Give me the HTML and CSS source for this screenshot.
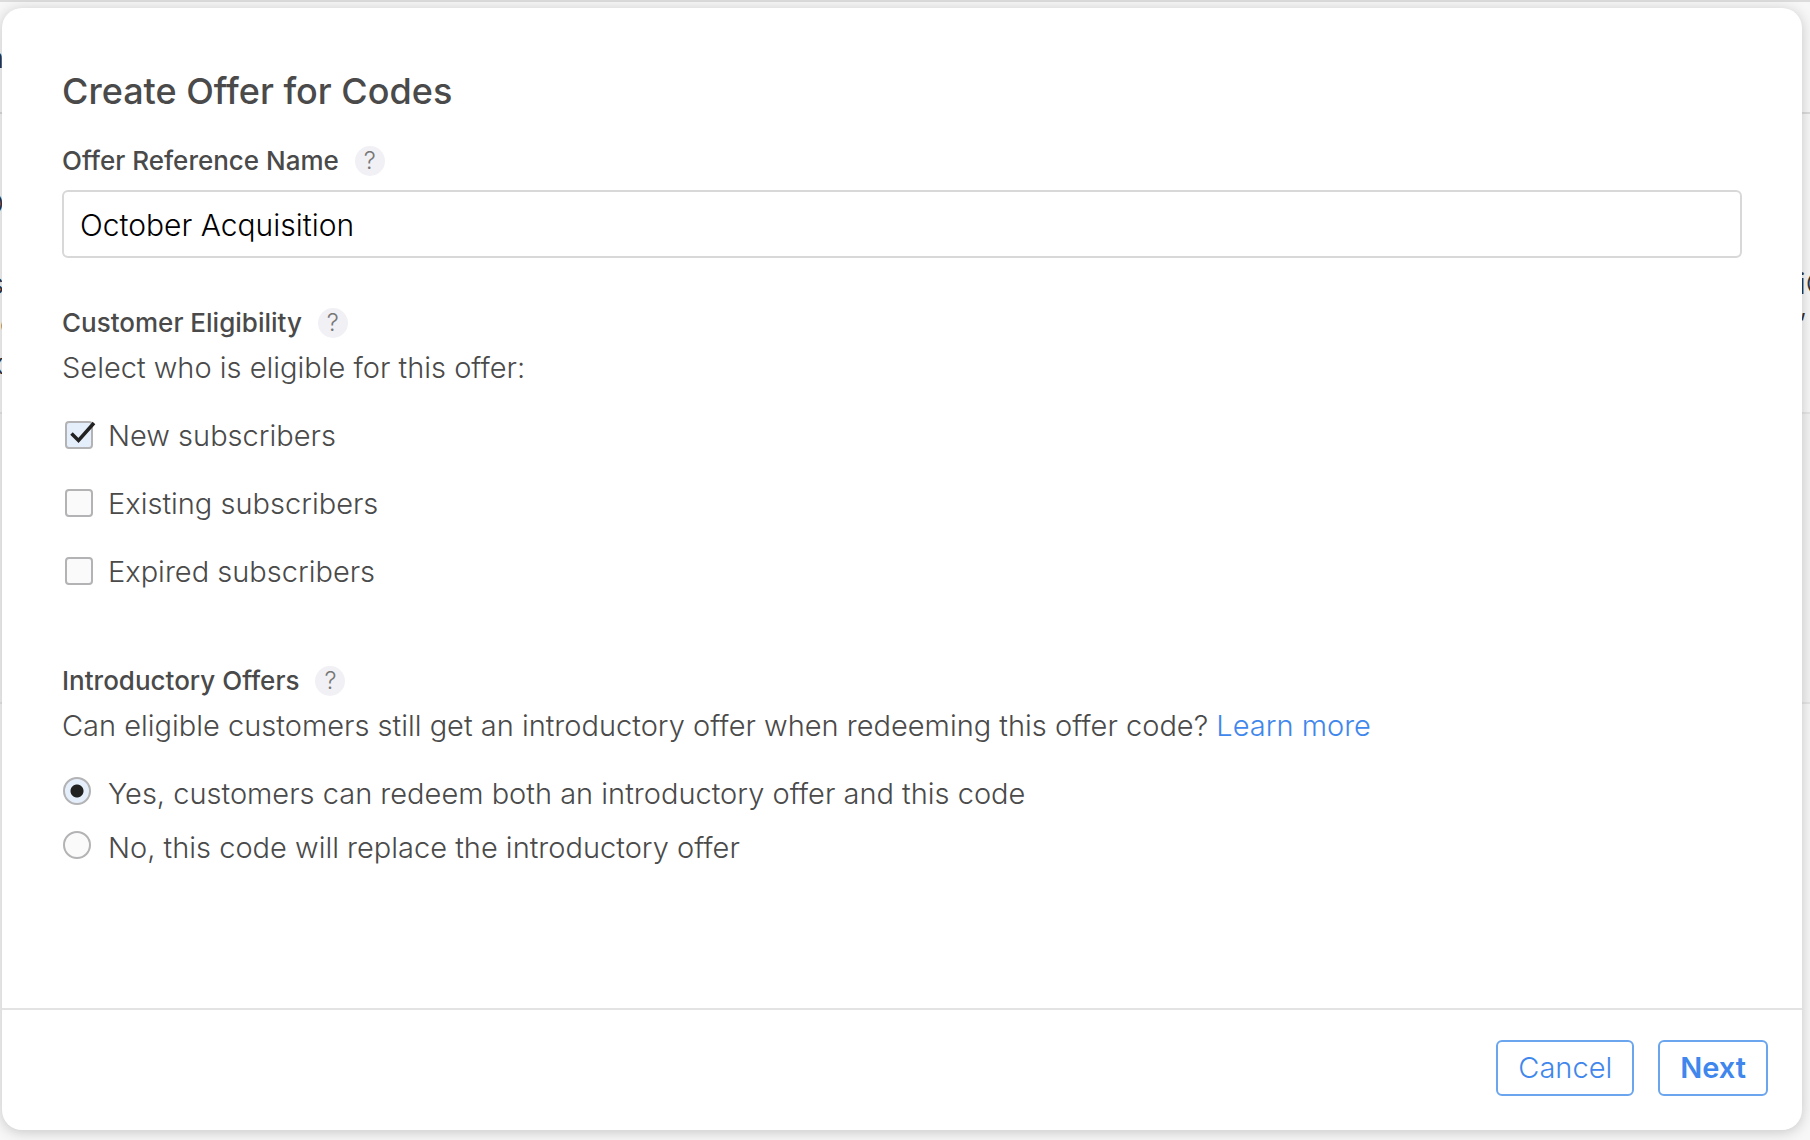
FILE: index.html
```
<!DOCTYPE html>
<html lang="en">
<head>
<meta charset="utf-8">
<meta name="viewport" content="width=device-width, initial-scale=1">
<title>Create Offer for Codes</title>
<link rel="stylesheet" href="styles.css">
</head>
<body>
<div class="backdrop" aria-hidden="true">
  <div class="band band-head"><span class="edge edge-left"><span>n</span></span></div>
  <div class="band band-copy">
    <span class="edge edge-left"><span>O</span><span></span><span>s</span><span class="start">c</span><span>x</span></span>
    <span class="edge edge-right"><span></span><span></span><span>iO</span><span>’</span><span></span></span>
  </div>
  <div class="band band-list"></div>
  <div class="band band-rest"></div>
</div>
<form class="modal" role="dialog" aria-labelledby="dialog-title">
  <div class="modal-body">
    <h1 class="title" id="dialog-title">Create Offer for Codes</h1>

    <div class="heading">
      <label class="heading-text" for="offer-name">Offer Reference Name</label>
      <button class="help" type="button" aria-label="Help with offer reference name">?</button>
    </div>
    <input class="text-field" id="offer-name" type="text" value="October Acquisition">

    <section class="group" aria-labelledby="eligibility">
      <div class="heading">
        <h2 class="heading-text" id="eligibility">Customer Eligibility</h2>
        <button class="help" type="button" aria-label="Help with customer eligibility">?</button>
      </div>
      <p class="hint">Select who is eligible for this offer:</p>
      <div class="checks">
        <label class="choice"><span class="box"><input class="check" type="checkbox" checked><svg class="tick" viewBox="0 0 32 32" aria-hidden="true"><path d="M9.500 15.500L16.500 22.500L32 5"/></svg></span>New subscribers</label>
        <label class="choice"><span class="box"><input class="check" type="checkbox"></span>Existing subscribers</label>
        <label class="choice"><span class="box"><input class="check" type="checkbox"></span>Expired subscribers</label>
      </div>
    </section>

    <section class="group group-intro" aria-labelledby="intro">
      <div class="heading">
        <h2 class="heading-text" id="intro">Introductory Offers</h2>
        <button class="help" type="button" aria-label="Help with introductory offers">?</button>
      </div>
      <p class="hint">Can eligible customers still get an introductory offer when redeeming this offer code? <a class="link" href="#">Learn more</a></p>
      <div class="radios">
        <label class="choice"><span class="box"><input class="radio" type="radio" name="intro" checked></span>Yes, customers can redeem both an introductory offer and this code</label>
        <label class="choice"><span class="box"><input class="radio" type="radio" name="intro"></span>No, this code will replace the introductory offer</label>
      </div>
    </section>
  </div>
  <div class="modal-footer">
    <button class="button" type="button">Cancel</button>
    <button class="button button-primary" type="submit">Next</button>
  </div>
</form>
</body>
</html>
```
FILE: styles.css
```
* { box-sizing: border-box; }

body {
  margin: 0;
  min-height: 100vh;
  display: flex;
  padding: 8px 8px 10px 2px;
  background: #f7f7f7;
  color: #4a4a4a;
  font-family: Inter, "Liberation Sans", sans-serif;
  font-size: 29px;
  font-variant-ligatures: none;
  font-weight: 300;
  line-height: 36px;
  overflow: hidden;
}

/* Page behind the dialog */
.backdrop {
  position: absolute;
  inset: 0;
  z-index: -1;
  display: flex;
  flex-direction: column;
  overflow: hidden;
  border-top: 2px solid #dcdcdc;
}
.band {
  display: flex;
  justify-content: space-between;
  border-bottom: 2px solid #dcdcdc;
}
.band-head { height: 112px; padding-top: 36px; }
.band-copy { height: 300px; padding-top: 70px; border-color: #e6e6e6; }
.band-list { height: 290px; border-color: #e6e6e6; }
.band-list { background: #f3f3f3; }
.band-rest { flex: 1; border: 0; }
.edge {
  display: flex;
  flex-direction: column;
  color: #333;
  line-height: 40px;
  overflow: hidden;
}
.edge span { min-height: 40px; }
.edge-left { width: 4px; align-items: flex-end; }
.edge-left .start { align-self: flex-start; }
.edge-right { width: 11px; }

/* Dialog */
.modal {
  flex: 1;
  display: flex;
  flex-direction: column;
  background: #fff;
  border-radius: 20px;
  box-shadow: 0 2px 14px rgba(0, 0, 0, .2);
}
.modal-body { flex: 1; padding: 59px 60px 0; }
.title {
  margin: 0 0 31px;
  font-size: 36px;
  font-weight: 500;
  line-height: 48px;
}
.heading { display: flex; align-items: center; gap: 16px; height: 30px; }
.heading-text {
  margin: 0;
  font-size: 26px;
  font-weight: 500;
  line-height: 30px;
}
.help {
  width: 30px;
  height: 30px;
  padding: 0;
  border: 0;
  border-radius: 50%;
  background: #f1f0f5;
  color: #777;
  font: 300 24px/30px Inter, "Liberation Sans", sans-serif;
}
.text-field {
  display: block;
  width: 100%;
  height: 68px;
  margin-top: 14px;
  padding: 2px 16px 0;
  border: 2px solid #d8d8d8;
  border-radius: 6px;
  background: #fff;
  color: #000;
  font: inherit;
  font-size: 30px;
}
.group { margin-top: 50px; }
.group-intro { margin-top: 76px; }
.hint { margin: 12px 0 0; }
.link { color: #3f87ec; text-decoration: none; }
.checks, .radios { display: flex; flex-direction: column; align-items: flex-start; }
.checks { gap: 32px; margin-top: 32px; }
.radios { gap: 18px; margin-top: 32px; }
.choice { display: flex; gap: 14px; }
.box { position: relative; width: 32px; height: 32px; }
.check, .radio {
  appearance: none;
  display: block;
  width: 28px;
  height: 28px;
  border: 2px solid #b3b3b5;
  background: #fafafa;
}
.check { margin: 3px; border-radius: 4px; }
.radio { margin: 1px; border-radius: 50%; }
.check:checked { background: #e5effb; }
.radio:checked { background: radial-gradient(circle, #222 6px, #e5effb 7px); }
.tick {
  position: absolute;
  inset: 0;
  overflow: visible;
  fill: none;
  stroke: #222;
  stroke-width: 3.500;
  pointer-events: none;
}
.modal-footer {
  display: flex;
  justify-content: flex-end;
  gap: 24px;
  padding: 30px 34px 34px;
  border-top: 2px solid #e3e3e3;
}
.button {
  height: 56px;
  padding: 0 20px;
  border: 2px solid #6aa5ee;
  border-radius: 6px;
  background: #fff;
  color: #3f87ec;
  font: inherit;
}
.button-primary { font-weight: 600; }
```
